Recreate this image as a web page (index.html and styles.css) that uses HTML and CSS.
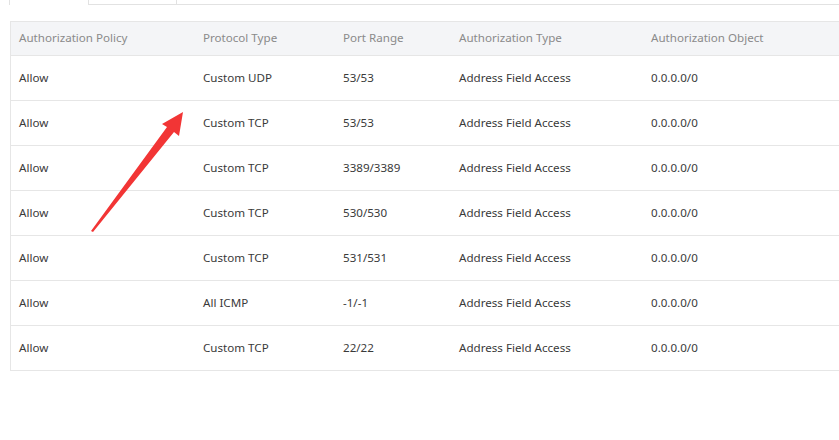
FILE: index.html
```html
<!DOCTYPE html>
<html>
<head>
<meta charset="utf-8">
<link rel="stylesheet" href="styles.css">
</head>
<body>
<div class="page">
  <div class="tabs">
    <div class="tab tab-active"></div>
    <div class="tab"></div>
    <div class="tab-rest"></div>
  </div>
  <div class="table-wrap">
    <table class="rules">
      <thead>
        <tr><th class="c1">Authorization Policy</th><th class="c2">Protocol Type</th><th class="c3">Port Range</th><th class="c4">Authorization Type</th><th class="c5">Authorization Object</th></tr>
      </thead>
      <tbody>
        <tr><td>Allow</td><td>Custom UDP</td><td>53/53</td><td>Address Field Access</td><td>0.0.0.0/0</td></tr>
        <tr><td>Allow</td><td>Custom TCP</td><td>53/53</td><td>Address Field Access</td><td>0.0.0.0/0</td></tr>
        <tr><td>Allow</td><td>Custom TCP</td><td>3389/3389</td><td>Address Field Access</td><td>0.0.0.0/0</td></tr>
        <tr><td>Allow</td><td>Custom TCP</td><td>530/530</td><td>Address Field Access</td><td>0.0.0.0/0</td></tr>
        <tr><td>Allow</td><td>Custom TCP</td><td>531/531</td><td>Address Field Access</td><td>0.0.0.0/0</td></tr>
        <tr><td>Allow</td><td>All ICMP</td><td>-1/-1</td><td>Address Field Access</td><td>0.0.0.0/0</td></tr>
        <tr><td>Allow</td><td>Custom TCP</td><td>22/22</td><td>Address Field Access</td><td>0.0.0.0/0</td></tr>
      </tbody>
    </table>
    <svg class="arrow" width="839" height="440" viewBox="0 0 839 440">
      <polygon points="91,231 167,127 162,124 183,112 179,136 174,132 93,232" fill="#f23535"/>
    </svg>
  </div>
</div>
</body>
</html>
```

FILE: styles.css
```css
html, body {
  margin: 0;
  padding: 0;
  background: #fff;
  overflow: hidden;
}
.page {
  width: 839px;
  height: 440px;
  overflow: hidden;
  position: relative;
  font-family: "Noto Sans", "Liberation Sans", sans-serif;
  font-size: 11.6px;
}
.tabs {
  display: flex;
  height: 5px;
  padding-left: 9px;
}
.tab {
  width: 88px;
  box-sizing: border-box;
  border-left: 1px solid #e2e2e2;
  border-bottom: 1px solid #e2e2e2;
}
.tab-active {
  width: 79px;
  border-bottom: none;
}
.tab-rest {
  flex: 1;
  border-left: 1px solid #e2e2e2;
  border-bottom: 1px solid #e2e2e2;
}
.table-wrap {
  margin-top: 16px;
  margin-left: 10px;
}
.rules {
  border-collapse: collapse;
  width: 900px;
  table-layout: fixed;
  border-left: 1px solid #e6e6e6;
}
.rules th, .rules td {
  text-align: left;
  padding: 0 0 2px 8px;
  white-space: nowrap;
  font-weight: normal;
}
.rules th {
  height: 31px;
  background: #f4f5f7;
  color: #8a8a8a;
  border-top: 1px solid #e6e6e6;
  border-bottom: 1px solid #e6e6e6;
}
.rules td {
  height: 42px;
  color: #3a3a3a;
  border-bottom: 1px solid #e6e6e6;
}
.c1 { width: 176px; }
.c2 { width: 132px; }
.c3 { width: 108px; }
.c4 { width: 184px; }
.arrow {
  position: absolute;
  left: 0;
  top: 0;
  pointer-events: none;
}
```
